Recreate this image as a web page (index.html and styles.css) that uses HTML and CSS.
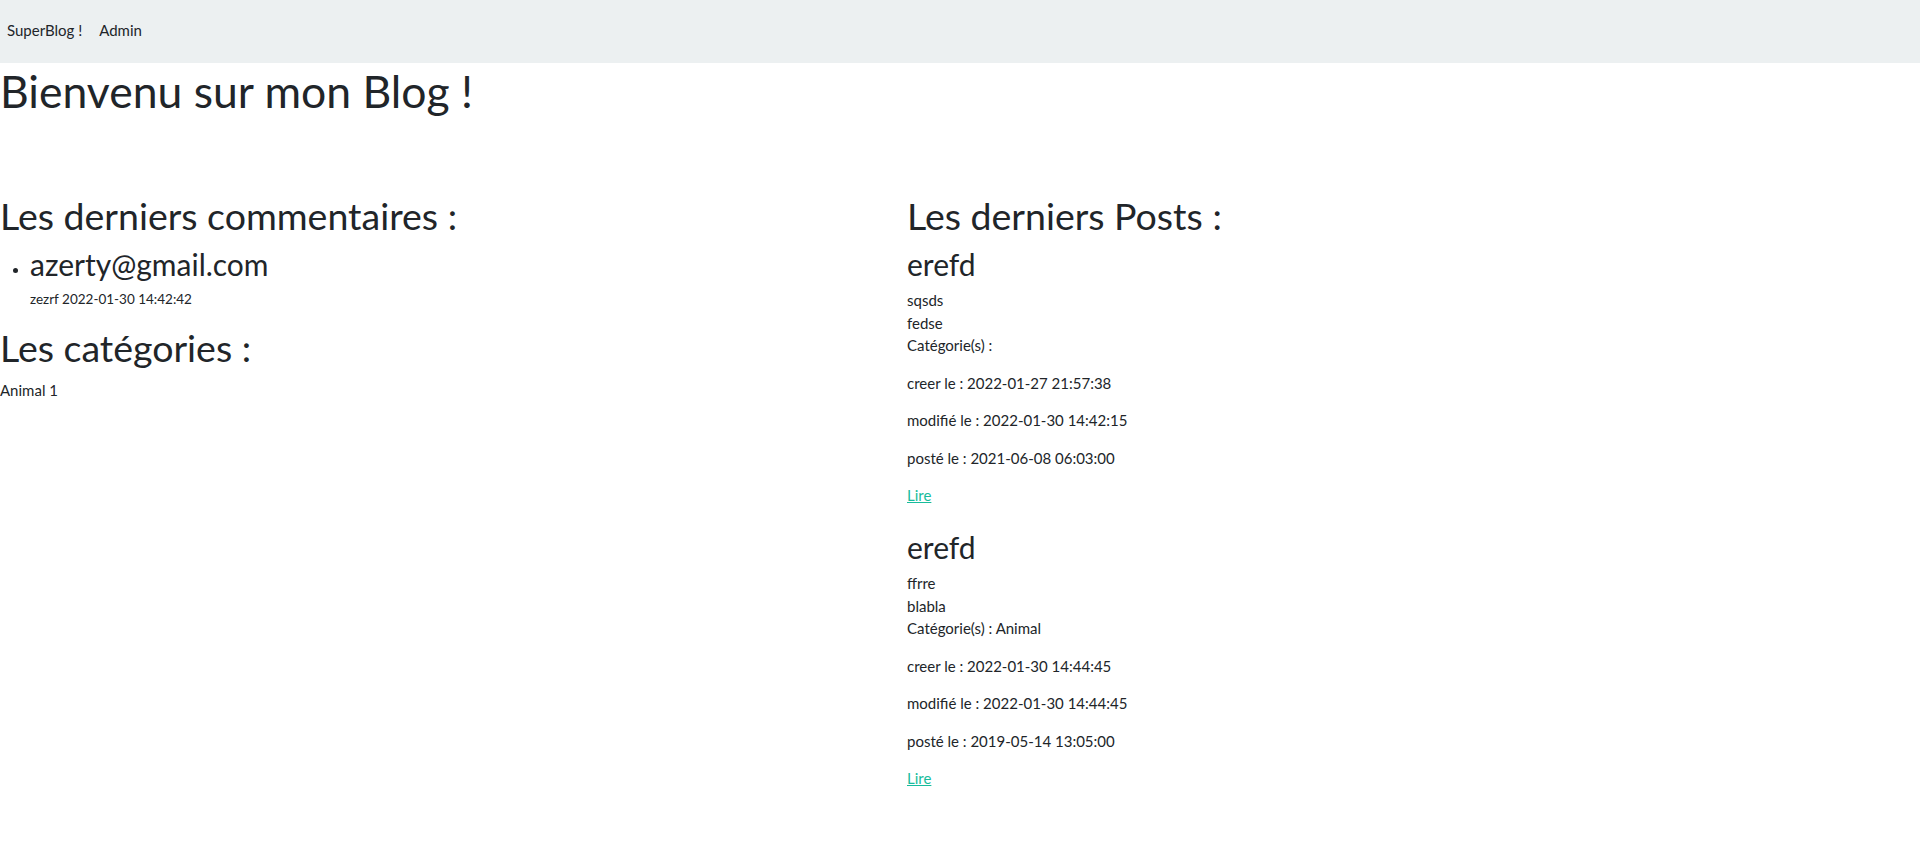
FILE: index.html
```html
<!DOCTYPE html>
<html lang="fr">
<head>
<meta charset="utf-8">
<title>SuperBlog !</title>
<link rel="stylesheet" href="styles.css">
</head>
<body>
<nav class="navbar">
  <a class="brand" href="#">SuperBlog !</a>
  <a class="nav-link" href="#">Admin</a>
</nav>
<h1 class="title">Bienvenu sur mon Blog !</h1>
<div class="row">
  <div class="col-left">
    <h2>Les derniers commentaires :</h2>
    <ul class="comments">
      <li>
        <h3>azerty@gmail.com</h3>
        <p class="comment-text">zezrf 2022-01-30 14:42:42</p>
      </li>
    </ul>
    <h2>Les catégories :</h2>
    <p class="cat">Animal 1</p>
  </div>
  <div class="col-right">
    <h2>Les derniers Posts :</h2>
    <article class="post">
      <h3>erefd</h3>
      <p>sqsds<br>fedse<br>Catégorie(s) : </p>
      <p>creer le : 2022-01-27 21:57:38</p>
      <p>modifié le : 2022-01-30 14:42:15</p>
      <p>posté le : 2021-06-08 06:03:00</p>
      <p><a href="#">Lire</a></p>
    </article>
    <article class="post">
      <h3>erefd</h3>
      <p>ffrre<br>blabla<br>Catégorie(s) : Animal</p>
      <p>creer le : 2022-01-30 14:44:45</p>
      <p>modifié le : 2022-01-30 14:44:45</p>
      <p>posté le : 2019-05-14 13:05:00</p>
      <p><a href="#">Lire</a></p>
    </article>
  </div>
</div>
</body>
</html>
```
FILE: styles.css
```css
* { box-sizing: border-box; }
body {
  margin: 0;
  font-family: Lato, "Noto Sans", sans-serif;
  font-size: 15px;
  line-height: 1.5;
  color: #212529;
  background: #fff;
}
a { color: #18bc9c; }
.navbar {
  background: #ecf0f1;
  height: 63px;
  display: flex;
  align-items: center;
  gap: 17px;
  padding: 0 7px 2px;
}
.navbar a { color: #212529; text-decoration: none; }
h1, h2, h3 {
  margin: 0 0 7.5px;
  font-weight: 400;
  line-height: 1.2;
}
.title { font-size: 44.5px; line-height: 55px; margin-bottom: 75px; }
h2 { font-size: 37.5px; }
h3 { font-size: 30px; }
p { margin: 0 0 15px; }
.row {
  display: grid;
  grid-template-columns: 907px 1fr;
}
.comments { margin: 0 0 16px; padding-left: 30px; }
.comment-text { font-size: 13.5px; }
.cat { padding-top: 1px; }
.post + .post { padding-top: 7px; }
```
